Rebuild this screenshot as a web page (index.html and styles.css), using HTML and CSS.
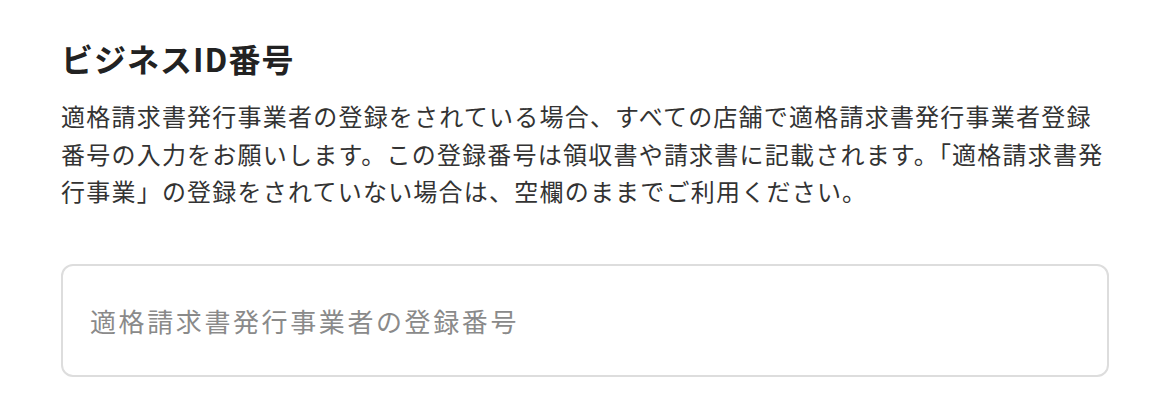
FILE: index.html
```html
<!DOCTYPE html>
<html lang="ja">
<head>
<meta charset="utf-8">
<title>ビジネスID番号</title>
<link rel="stylesheet" href="styles.css">
</head>
<body>
<section class="field">
  <h2 class="field-title">ビジネスID番号</h2>
  <p class="field-desc">適格請求書発行事業者の登録をされている場合、すべての店舗で適格請求書発行事業者登録<br>番号の入力をお願いします。この登録番号は領収書や請求書に記載されます。「適格請求書発<br>行事業」の登録をされていない場合は、空欄のままでご利用ください。</p>
  <input class="field-input" type="text" placeholder="適格請求書発行事業者の登録番号">
</section>
</body>
</html>
```
FILE: styles.css
```css
html, body {
  margin: 0;
  padding: 0;
  background: #ffffff;
}
body {
  font-family: "Noto Sans CJK JP", "Noto Sans", sans-serif;
  color: #333333;
}
.field {
  width: 1048px;
  margin-left: 61px;
  padding-top: 36px;
  display: flex;
  flex-direction: column;
}
.field-title {
  margin: 0;
  font-size: 32px;
  line-height: 44px;
  font-weight: 700;
  letter-spacing: 1px;
  color: #222222;
}
.field-desc {
  margin: 17px 0 0;
  font-size: 24px;
  line-height: 37.5px;
  letter-spacing: 1.22px;
  white-space: nowrap;
  color: #333333;
}
.field-input {
  margin-top: 54px;
  box-sizing: border-box;
  width: 100%;
  height: 113px;
  border: 2px solid #dddddd;
  border-radius: 12px;
  padding: 0 27px;
  font-family: "Noto Sans CJK JP", "Noto Sans", sans-serif;
  font-size: 26px;
  letter-spacing: 2.6px;
  color: #333333;
  background: #ffffff;
  outline: none;
}
.field-input::placeholder {
  color: #8a8a8a;
  opacity: 1;
}
```
